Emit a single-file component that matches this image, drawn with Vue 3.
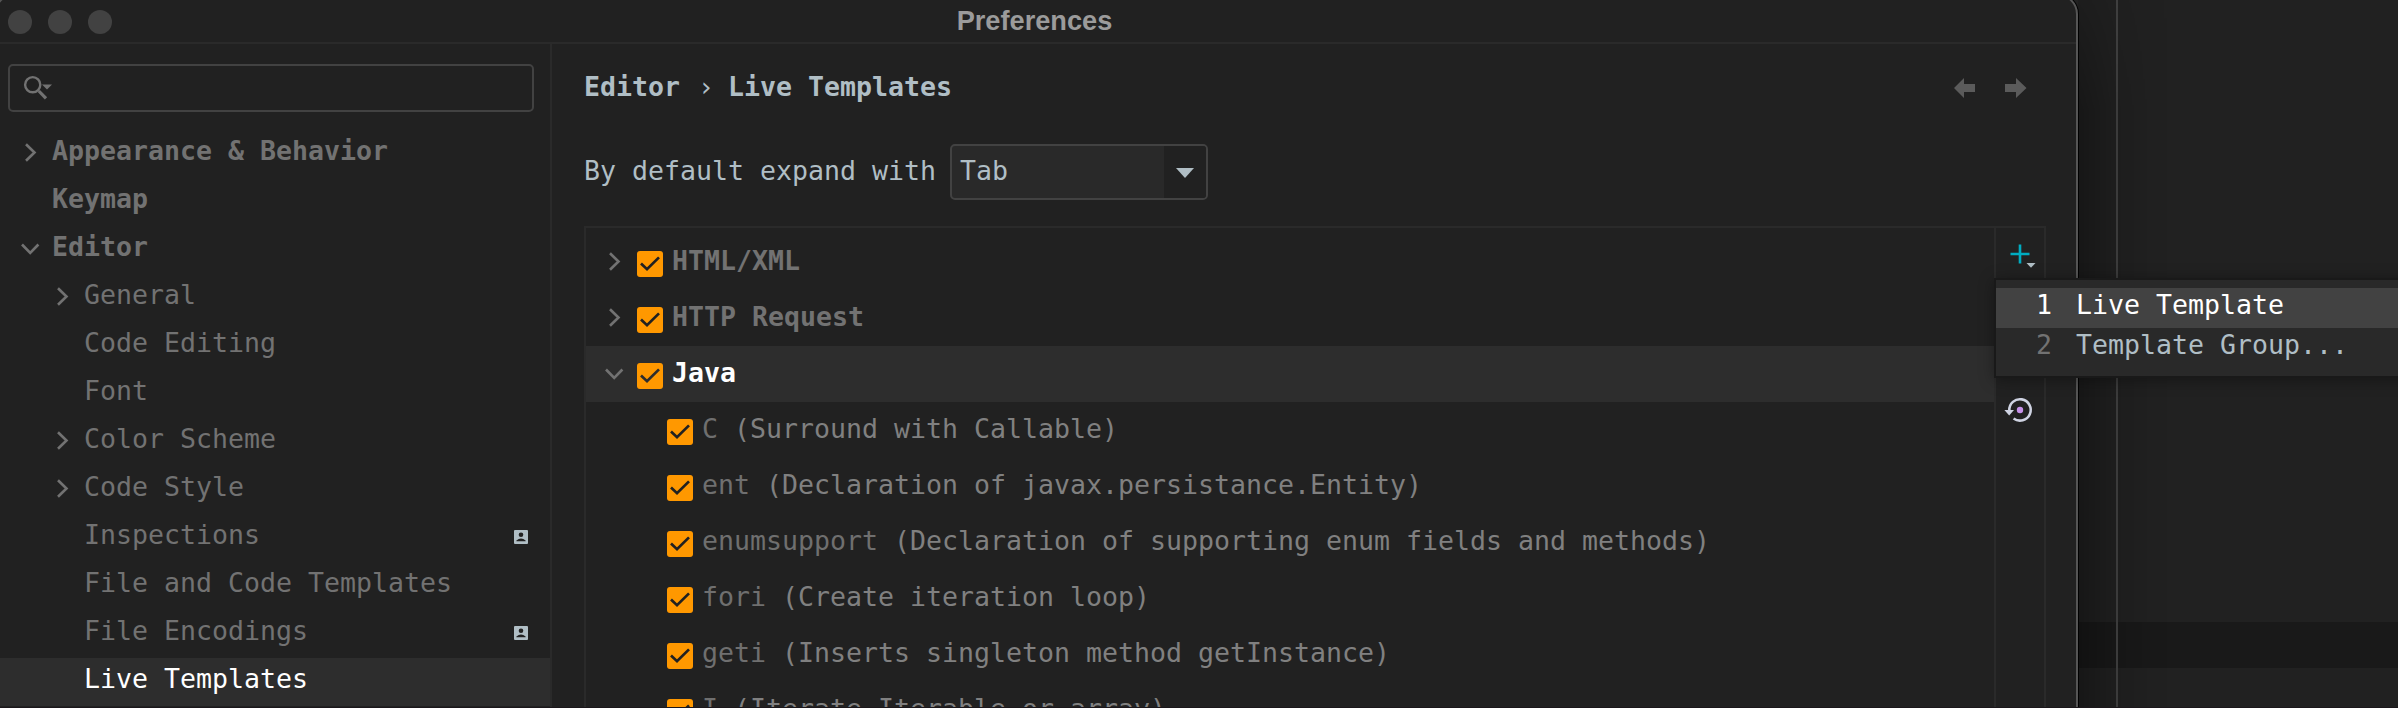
<script setup>
const sidebar = [
  { label: 'Appearance & Behavior', level: 0, arrow: 'right' },
  { label: 'Keymap', level: 0 },
  { label: 'Editor', level: 0, arrow: 'down' },
  { label: 'General', level: 1, arrow: 'right' },
  { label: 'Code Editing', level: 1 },
  { label: 'Font', level: 1 },
  { label: 'Color Scheme', level: 1, arrow: 'right' },
  { label: 'Code Style', level: 1, arrow: 'right' },
  { label: 'Inspections', level: 1, badge: true },
  { label: 'File and Code Templates', level: 1 },
  { label: 'File Encodings', level: 1, badge: true },
  { label: 'Live Templates', level: 1, selected: true },
]

const templates = [
  { name: 'HTML/XML', group: true, arrow: 'right' },
  { name: 'HTTP Request', group: true, arrow: 'right' },
  { name: 'Java', group: true, arrow: 'down', selected: true },
  { name: 'C', text: '(Surround with Callable)' },
  { name: 'ent', text: '(Declaration of javax.persistance.Entity)' },
  { name: 'enumsupport', text: '(Declaration of supporting enum fields and methods)' },
  { name: 'fori', text: '(Create iteration loop)' },
  { name: 'geti', text: '(Inserts singleton method getInstance)' },
  { name: 'I', text: '(Iterate Iterable or array)' },
]

const menu = [
  { key: '1', label: 'Live Template', selected: true },
  { key: '2', label: 'Template Group...' },
]

const chevrons = {
  right: 'M6 2.2 L14.5 10.5 L6 18.8',
  down: 'M2 6.5 L10.2 15 L18.4 6.5',
}
</script>

<template>
  <div class="screen">
    <div class="backdrop">
      <div class="caret-row"></div>
      <div class="margin-line"></div>
      <div class="shade"></div>
    </div>

    <div class="window">
      <header class="titlebar">
        <div class="lights"><i></i><i></i><i></i></div>
        <div class="title">Preferences</div>
      </header>

      <div class="body">
        <aside class="sidebar">
          <div class="search">
            <svg width="34" height="30" viewBox="0 0 34 30">
              <circle cx="10.7" cy="10.7" r="7.6" fill="none" stroke="#727272" stroke-width="2.4" />
              <path d="M16.8 17 L24 24.4" stroke="#727272" stroke-width="3.2" />
              <path d="M20 10.5 H30 L25 15.5 Z" fill="#727272" />
            </svg>
          </div>
          <nav class="tree">
            <div
              v-for="item in sidebar"
              :key="item.label"
              class="tree-row"
              :class="{ child: item.level === 1, selected: item.selected }"
            >
              <span class="arrow">
                <svg v-if="item.arrow" width="20" height="21" viewBox="0 0 20 21">
                  <path :d="chevrons[item.arrow]" fill="none" stroke="#727272" stroke-width="2.6" />
                </svg>
              </span>
              <span class="tree-label">{{ item.label }}</span>
              <svg v-if="item.badge" class="badge" width="14" height="14" viewBox="0 0 14 14">
                <rect width="14" height="14" rx="1" fill="#b0bec5" />
                <circle cx="7" cy="4.7" r="2.3" fill="#212121" />
                <path d="M2.4 11.2 V10.6 Q7 6.4 11.6 10.6 V11.2 Z" fill="#212121" />
              </svg>
            </div>
          </nav>
        </aside>

        <main class="main">
          <div class="crumbs">
            <div class="crumb-text"><b>Editor</b><span class="sep"> › </span><b>Live Templates</b></div>
            <div class="history">
              <svg width="22" height="20" viewBox="0 0 22 20"><path d="M0 10 L10 0 V6 H21 V14 H10 V20 Z" /></svg>
              <svg width="22" height="20" viewBox="0 0 22 20"><path d="M21.5 10 L11 0 V6 H0 V14 H11 V20 Z" /></svg>
            </div>
          </div>

          <div class="expand">
            <label>By default expand with</label>
            <div class="select">
              <span class="value">Tab</span>
              <span class="toggle">
                <svg width="18" height="10" viewBox="0 0 18 10"><path d="M0 0 H18 L9 10 Z" fill="#b0bec5" /></svg>
              </span>
            </div>
          </div>

          <section class="panel">
            <div class="list">
              <div
                v-for="t in templates"
                :key="t.name"
                class="row"
                :class="{ group: t.group, selected: t.selected }"
              >
                <span v-if="t.group" class="row-arrow">
                  <svg width="20" height="21" viewBox="0 0 20 21">
                    <path :d="chevrons[t.arrow]" fill="none" stroke="#727272" stroke-width="2.6" />
                  </svg>
                </span>
                <svg class="check" width="26" height="26" viewBox="0 0 26 26">
                  <rect width="26" height="26" rx="3" fill="#ff9800" />
                  <path d="M4 12.6 L10 18.2 L22 6.4" fill="none" :stroke="t.selected ? '#2d2d2d' : '#212121'" stroke-width="2.7" />
                </svg>
                <span class="name">{{ t.name }}</span>
                <span v-if="t.text" class="desc">&nbsp;{{ t.text }}</span>
              </div>
            </div>
            <div class="tools">
              <svg class="add" width="28" height="26" viewBox="0 0 28 26">
                <path d="M0.5 10 H19.5 M10 0.5 V19.5" stroke="#00acc1" stroke-width="2.6" />
                <path d="M16.5 19 H25.5 L21 23.8 Z" fill="#b0bec5" />
              </svg>
              <svg class="reset" width="32" height="28" viewBox="0 0 32 28">
                <path d="M5.3 14.5 A10.7 10.7 0 1 1 9.6 22.5" fill="none" stroke="#cfd3e2" stroke-width="2.6" />
                <path d="M0.4 14 H10 L5.2 19.4 Z" fill="#cfd3e2" />
                <circle cx="16" cy="14" r="3.2" fill="#c792ea" />
              </svg>
            </div>
          </section>
        </main>
      </div>
    </div>

    <div class="popup">
      <div v-for="m in menu" :key="m.key" class="menu-item" :class="{ selected: m.selected }">
        <span class="key">{{ m.key }}</span><span>{{ m.label }}</span>
      </div>
    </div>
    <div class="edge"></div>
  </div>
</template>

<style>
html, body { margin: 0; background: #212121; overflow: hidden; }
</style>

<style scoped>
.screen {
  position: relative;
  width: 2398px;
  height: 708px;
  overflow: hidden;
  background: #212121;
  color: #b0bec5;
  font-family: "DejaVu Sans Mono", monospace;
  font-size: 26.58px;
  white-space: pre;
}
.screen * { box-sizing: border-box; }
.screen svg { display: block; flex: none; }

.backdrop { position: absolute; inset: 0; }
.caret-row { position: absolute; top: 622px; left: 2078px; right: 0; height: 46px; background: #191919; }
.margin-line { position: absolute; left: 2116px; top: 0; bottom: 0; width: 2px; background: #424242; }
.shade {
  position: absolute; left: 2078px; top: 0; bottom: 0; width: 90px;
  background: linear-gradient(90deg, rgba(0,0,0,.3), rgba(0,0,0,.11) 40%, rgba(0,0,0,.03) 75%, transparent);
  mask-image: linear-gradient(180deg, rgba(0,0,0,.4), #000 110px);
}

.window {
  position: absolute;
  left: -6px; top: -6px;
  width: 2084px; height: 740px;
  padding: 4px 0 0 4px;
  background: #212121;
  border: 2px solid #555;
  border-radius: 20px;
  box-shadow: 0 0 0 1px #000;
  display: flex;
  flex-direction: column;
}
.titlebar {
  flex: none;
  position: relative;
  height: 44px;
  border-bottom: 2px solid #2a2a2a;
  display: flex;
  align-items: center;
  justify-content: center;
}
.lights { position: absolute; left: 8px; top: 10px; display: flex; gap: 16px; }
.lights i { width: 24px; height: 24px; border-radius: 50%; background: #424242; }
.title {
  font: 700 27.2px/40px "Liberation Sans", Arial, sans-serif;
  color: #9b9b9b;
  padding-right: 7px;
}
.body { flex: 1; display: flex; min-height: 0; }

.sidebar { width: 552px; flex: none; border-right: 2px solid #2a2a2a; padding-top: 20px; }
.search {
  width: 526px; height: 48px; margin-left: 8px;
  border: 2px solid #424242; border-radius: 5px;
  padding: 8px 0 0 12px;
}
.tree { margin-top: 18px; }
.tree-row { display: flex; height: 48px; padding-left: 20px; color: #727272; font-weight: 700; line-height: 42px; }
.tree-row.child { padding-left: 52px; font-weight: 400; }
.tree-row.selected { background: #2d2d2d; color: #fff; }
.arrow { width: 32px; padding-top: 12px; }
.tree-label { flex: 1; }
.badge { margin: 16px 22px 0 0; }

.main { flex: 1; padding: 26px 30px 0 32px; display: flex; flex-direction: column; }
.crumbs { flex: none; display: flex; justify-content: space-between; height: 74px; line-height: 34px; }
.sep { display: inline-block; padding-left: 2px; margin-right: -2px; }
.history { display: flex; gap: 29px; padding: 8px 19px 0 0; fill: #5b5b5b; }
.expand { flex: none; display: flex; height: 56px; margin: 0 0 26px; }
.expand label { line-height: 54px; width: 366px; }
.select {
  width: 258px; height: 56px;
  border: 2px solid #424242; border-radius: 5px;
  display: flex; background: #292929; overflow: hidden;
}
.value { flex: 1; padding-left: 8px; line-height: 50px; }
.toggle { width: 42px; background: #212121; padding: 22px 0 0 12px; }

.panel { flex: none; height: 500px; border: 2px solid #2a2a2a; display: flex; width: 1462px; }
.list { flex: 1; padding-top: 6px; }
.row { display: flex; height: 56px; padding-left: 81px; line-height: 54px; color: #6f6f6f; }
.row.group { padding-left: 18px; font-weight: 700; color: #727272; }
.row.selected { background: #2d2d2d; color: #fff; }
.row-arrow { width: 33px; padding-top: 17px; }
.check { margin: 17px 9px 0 0; }
.desc { color: #808080; }
.tools { width: 50px; border-left: 2px solid #2a2a2a; padding-left: 8px; }
.add { margin: 16px 0 0 6px; }
.reset { margin: 126px 0 0 0; }

.popup {
  position: absolute;
  left: 1994px; top: 278px;
  width: 420px; height: 100px;
  padding-top: 8px;
  border: 2px solid #191919;
  background: #292929;
  box-shadow: 0 2px 14px rgba(0,0,0,.35);
}
.menu-item { display: flex; height: 40px; line-height: 34px; padding-left: 40px; }
.menu-item.selected { background: #424242; color: #fff; }
.key { width: 40px; color: #727272; }
.selected .key { color: #fff; }
.edge { position: absolute; left: 0; right: 0; bottom: 0; height: 1px; background: #1b171b; }
</style>
